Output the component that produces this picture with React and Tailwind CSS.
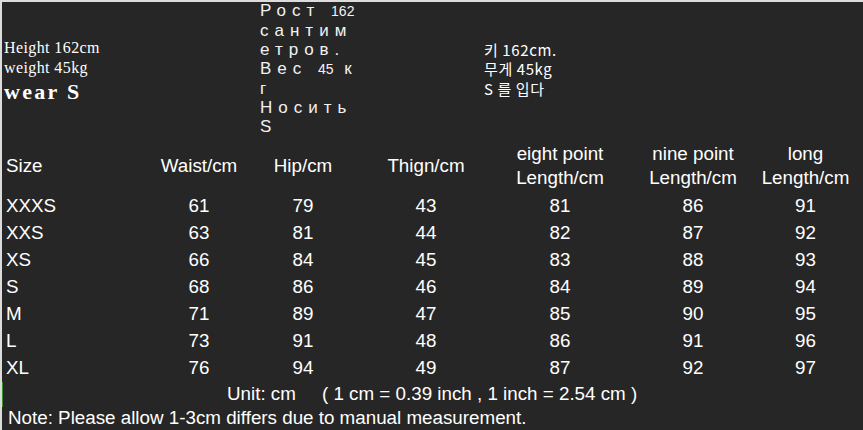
const rows = [
  ["XXXS", 61, 79, 43, 81, 86, 91],
  ["XXS", 63, 81, 44, 82, 87, 92],
  ["XS", 66, 84, 45, 83, 88, 93],
  ["S", 68, 86, 46, 84, 89, 94],
  ["M", 71, 89, 47, 85, 90, 95],
  ["L", 73, 91, 48, 86, 91, 96],
  ["XL", 76, 94, 49, 87, 92, 97],
];

const cols = ["w-[154px]", "w-[78px]", "w-[130px]", "w-[116px]", "w-[152px]", "w-[114px]", "w-[111px]"];

function Cell({ i, children }) {
  return <div className={`${cols[i]} shrink-0 whitespace-nowrap ${i === 0 ? "text-left" : "flex flex-col items-center"}`}>{children}</div>;
}

const ru = ["Рост|162", "сантим", "етров.", "Вес|45|к", "г", "Носить", "S"];

function RuLine({ text }) {
  // numbers are narrow, letters spaced out
  const parts = text.split("|");
  return (
    <div className="whitespace-nowrap">
      {parts.map((p, i) => (
        <span key={i}>
          <span className={/^\d+$/.test(p) ? "tracking-normal text-[14px]" : "tracking-[6px]"}>{p}</span>
          {i < parts.length - 1 ? <span className="tracking-[6px]"> </span> : null}
        </span>
      ))}
    </div>
  );
}

export default function App() {
  return (
    <div className="relative w-[863px] h-[430px] overflow-hidden bg-[#262626] border-l-2 border-t-2 border-[#dcdcdc] text-white">
      <div className="absolute left-[-2px] top-[380px] w-[3px] h-[25px] bg-[#3f8f2a]" />

      {/* top notes */}
      <div className="flex items-center h-[136px] pt-[4px]">
        <div className="w-[256px] pl-[2px] -mt-[1px] font-['Liberation_Serif',serif]">
          <div className="text-[16px] leading-[20px] tracking-[0.4px]">Height 162cm</div>
          <div className="text-[16px] leading-[20px] tracking-[0.4px]">weight 45kg</div>
          <div className="text-[22px] leading-[28px] font-bold tracking-[2.3px]">wear S</div>
        </div>
        <div className="w-[226px] pl-[2px] -mt-[7px] font-['Liberation_Sans',sans-serif] text-[17px] leading-[19px] text-[#f2f2f2]">
          {ru.map((l, i) => (
            <RuLine key={i} text={l} />
          ))}
        </div>
        <div className="-mt-[6px] font-['Noto_Sans_CJK_KR','Liberation_Sans',sans-serif] text-[15px] leading-[19.5px] tracking-[0.6px]">
          <div>키 162cm.</div>
          <div>무게 45kg</div>
          <div>S 를 입다</div>
        </div>
      </div>

      {/* table */}
      <div className="pl-[4px] font-['Liberation_Sans',Arial,sans-serif] text-[18.8px]">
        <div className="flex items-center h-[55px] leading-[24px]">
          <Cell i={0}>Size</Cell>
          <Cell i={1}>Waist/cm</Cell>
          <Cell i={2}>Hip/cm</Cell>
          <Cell i={3}>Thign/cm</Cell>
          <Cell i={4}>
            <div>eight point</div>
            <div>Length/cm</div>
          </Cell>
          <Cell i={5}>
            <div>nine point</div>
            <div>Length/cm</div>
          </Cell>
          <Cell i={6}>
            <div>long</div>
            <div>Length/cm</div>
          </Cell>
        </div>
        {rows.map((r) => (
          <div key={r[0]} className="flex items-center h-[27px]">
            {r.map((v, i) => (
              <Cell key={i} i={i}>
                {v}
              </Cell>
            ))}
          </div>
        ))}
        <div className="flex items-center h-[24px] pl-[221px] whitespace-pre">
          Unit: cm{"     "}( 1 cm = 0.39 inch , 1 inch = 2.54 cm )
        </div>
        <div className="flex items-center h-[25px] pl-[2px]">
          Note: Please allow 1-3cm differs due to manual measurement.
        </div>
      </div>
    </div>
  );
}
